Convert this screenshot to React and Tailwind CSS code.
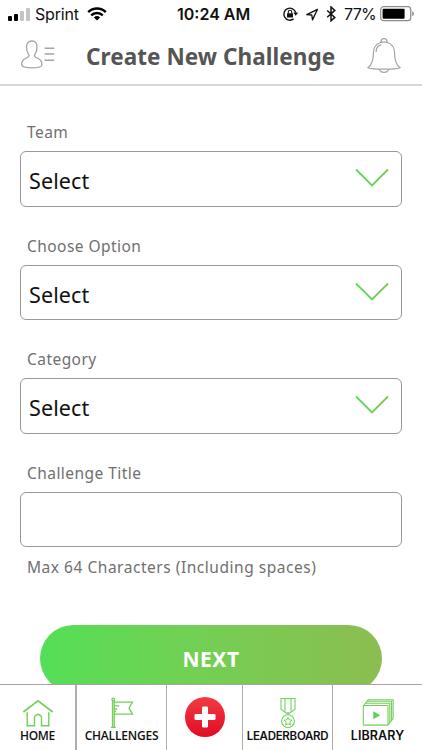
import React from "react";

function Signal() {
  return (
    <svg width="23" height="13" viewBox="0 0 23 13">
      <rect x="0" y="8" width="4" height="5" rx="1" fill="#000" />
      <rect x="6" y="6" width="4" height="7" rx="1" fill="#000" />
      <rect x="12" y="3" width="4" height="10" rx="1" fill="#c4c4c4" />
      <rect x="18" y="0" width="4" height="13" rx="1" fill="#c4c4c4" />
    </svg>
  );
}

function Wifi() {
  return (
    <svg width="20" height="14" viewBox="0 0 20 14" fill="none" stroke="#000" strokeWidth="2.4">
      <path d="M1.2 5.1a12.6 12.6 0 0 1 17.6 0M4.2 8.4a8.3 8.3 0 0 1 11.6 0" />
      <path d="M10 13.6 6.9 10.5a4.5 4.5 0 0 1 6.2 0z" fill="#000" stroke="none" />
    </svg>
  );
}

function StatusIcons() {
  return (
    <svg width="56" height="16" viewBox="0 0 56 16" fill="none" stroke="#111">
      <path d="M11.6 12.900A6 6 0 1 1 13.700 6.600" strokeWidth="1.4" />
      <path d="M11.3 6.600h4.800l-2.400 3.200z" fill="#111" stroke="none" />
      <rect x="5" y="7.2" width="6" height="4.4" rx=".6" fill="#111" stroke="none" />
      <path d="M6.3 7.4V6a1.7 1.7 0 0 1 3.4 0v1.4" strokeWidth="1.1" />
      <path d="M35.500 3.300 24.800 8.700l5 .3.700 4.900z" strokeWidth="1.3" strokeLinejoin="round" />
      <path d="m45.2 4.500 7.600 6.900-3.800 3.400V1l3.800 3.400-7.600 6.900" strokeWidth="1.5" />
    </svg>
  );
}

function Battery() {
  return (
    <svg width="35" height="16" viewBox="0 0 35 16">
      <rect x=".7" y=".7" width="30" height="14" rx="3" fill="none" stroke="#8b8b8b" strokeWidth="1.2" />
      <rect x="2.6" y="2.7" width="22" height="10" rx="1" fill="#000" />
      <path d="M32.3 5.3c2 .9 2 4 0 4.9z" fill="#777" />
    </svg>
  );
}

function Profile() {
  return (
    <svg width="34" height="29" viewBox="0 0 34 29" fill="none" stroke="#a3a3a3" strokeWidth="1.3">
      <path d="M11 1C7.600 1 5.400 3.200 5.500 7c0 3 .5 5.200 2.100 7.300.7 1.100.4 2.300-.8 3-2.400 1.300-4.700 2-5.600 4.200C.6 23 .6 24.600.9 25.700 3 28.500 19.100 28.500 20.700 25.700c.3-1.100.2-2.700-.4-4.200-.9-2.200-3.200-2.900-5.600-4.200-1.200-.7-1.500-1.900-.8-3C15.500 12.200 16 10 16 7c.1-3.800-1.600-6-5-6z" />
      <path d="M23.600 8.200h9.600M23.600 14h9.600M23.600 20.200h9.600" strokeWidth="1.500" />
    </svg>
  );
}

function Bell() {
  return (
    <svg className="shrink-0" width="34" height="36" viewBox="0 0 34 36" fill="none" stroke="#a3a3a3" strokeWidth="1.2">
      <path d="M14 4.300V3.600a3 3 0 0 1 6 0v.7C25.500 6 27.600 10 27.600 15.500c0 7 1.300 11 5.400 14.200-4.300 2-27.700 2-32 0 4.100-3.200 5.400-7.200 5.400-14.200C6.400 10 8.500 6 14 4.300z" />
      <path d="M9.100 14c0-4 1.800-6.500 5-7.200M14 4.300q3-.8 6 0M12.300 31.200c1 4.200 8.400 4.200 9.400 0" />
    </svg>
  );
}

function Chevron() {
  return (
    <svg width="34" height="20" viewBox="0 0 34 20" fill="none">
      <defs>
        <linearGradient id="chevron" x1="0" y1="0" x2="1" y2="0">
          <stop stopColor="#50df58" />
          <stop offset="1" stopColor="#85c351" />
        </linearGradient>
      </defs>
      <path d="m1 1.500 16 16 16-16" stroke="url(#chevron)" strokeWidth="1.800" />
    </svg>
  );
}

function Home() {
  return (
    <svg width="32" height="28" viewBox="0 0 32 28" fill="none" stroke="#73cf58" strokeWidth="1.400">
      <path d="M1.300 13 16 1.800 30.700 13" strokeWidth="1.600" />
      <path d="M5.200 13.200v13.600h7.300V19a3.500 3.500 0 0 1 7 0v7.800h7.300V13.200" />
    </svg>
  );
}

function Flag() {
  return (
    <svg width="24" height="32" viewBox="0 0 24 32" fill="none" stroke="#73cf58" strokeWidth="1.300">
      <circle cx="3.300" cy="2.500" r="1.300" />
      <path d="M2.500 4v26M4.200 4v26M.8 30.300h5M4.200 5.200h18.300l-3.500 6 3.500 6H4.200M4.200 8.800h5M4.200 12h3M4.200 14.500h2" />
    </svg>
  );
}

function Medal() {
  return (
    <svg width="18" height="32" viewBox="0 0 18 32" fill="none" stroke="#6ed35c" strokeWidth="1.100">
      <path d="M2 1.500h14v11L9 17l-7-4.500zM6 1.500v12.700M12 1.500v12.700M9 15v3" />
      <circle cx="9" cy="24.200" r="6.400" />
      <path d="m9 20.300 1.200 2.500 2.800.4-2 2 .5 2.800-2.500-1.300L6.500 28l.5-2.800-2-2 2.800-.4z" strokeWidth="1" />
    </svg>
  );
}

function Library() {
  return (
    <svg width="32" height="28" viewBox="0 0 32 28" fill="none" stroke="#73cf58" strokeWidth="1.100">
      <rect x="1.300" y="6.500" width="24.700" height="19.600" rx=".5" />
      <path d="M1.600 6.500 3.500 4.300h24.300v19.400L26 26M3.500 4.300l1.500-2h24.500v19.300l-1.700 2.100M5 2.300l1.200-1.500h24.900v18.700l-1.600 2.100" />
      <path d="m11.300 12.300 6.900 4-6.900 4z" fill="#5fd056" stroke="none" />
    </svg>
  );
}

function SelectField({ label }) {
  return (
    <div className="mb-[17.500px]">
      <Label>{label}</Label>
      <div className="flex h-[55.500px] items-center justify-between rounded-[6px] border-[1.500px] border-[#999] pl-[8px] pr-[12px]">
        <span className="pt-[4px] text-[21.500px] leading-none tracking-[0.100px] text-[#111]">Select</span>
        <div className="pb-[1px]"><Chevron /></div>
      </div>
    </div>
  );
}

function Label({ children }) {
  return (
    <div className="flex h-[40.500px] items-center pl-[7px] pt-[4px] text-[15.500px] tracking-[0.450px] text-[#707070]">
      {children}
    </div>
  );
}

function NavItem({ icon, label, className }) {
  return (
    <div className={"flex flex-col items-center whitespace-nowrap border-[#acacac] " + className}>
      <div className="flex h-[32px] items-center justify-center">{icon}</div>
      <span className="font-semibold leading-[14px] text-[#111]">{label}</span>
    </div>
  );
}

export default function App() {
  return (
    <div className="flex h-[750px] w-[422px] flex-col overflow-hidden bg-white font-['Noto_Sans',sans-serif]">
      <div className="flex h-[28px] shrink-0 items-center pl-[8px] pr-[6px] font-['Inter',sans-serif] text-[16px] text-[#111]">
        <div className="flex w-[169px] items-center">
          <Signal />
          <span className="ml-[4px] mr-[8px] tracking-[-0.200px]">Sprint</span>
          <Wifi />
        </div>
        <span className="w-[105px] font-semibold">10:24 AM</span>
        <StatusIcons />
        <span className="ml-[6px] w-[36px] tracking-[-0.700px]">77%</span>
        <Battery />
      </div>
      <header className="flex h-[58px] shrink-0 items-center border-b-2 border-[#d7d7d7] pl-[21px] pr-[21px]">
        <div className="w-[65px] pb-[3px]"><Profile /></div>
        <h1 className="w-[281px] shrink-0 whitespace-nowrap pt-[3px] text-[22.500px] font-bold leading-none tracking-[0.060px] text-[#555]">Create New Challenge</h1>
        <Bell />
      </header>
      <main className="min-h-0 flex-1 overflow-hidden px-[20px] pt-[24.500px]">
        <SelectField label="Team" />
        <SelectField label="Choose Option" />
        <SelectField label="Category" />
        <Label>Challenge Title</Label>
        <input aria-label="Challenge Title" className="block h-[55.500px] w-full rounded-[6px] border-[1.500px] border-[#999] px-3 outline-none" />
        <p className="mt-[8px] whitespace-nowrap pl-[7px] text-[15.500px] leading-[24px] tracking-[0.530px] text-[#707070]">Max 64 Characters (Including spaces)</p>
        <button className="mx-[20px] mt-[45.500px] flex h-[67px] w-[342px] items-center justify-center rounded-full bg-linear-to-r from-[#52df57] to-[#8bbd50] pt-[4px] text-[21px] font-bold tracking-[0.500px] text-white">NEXT</button>
      </main>
      <nav className="flex h-[66px] shrink-0 border-t border-[#a5a5a5] bg-white">
        <NavItem icon={<Home />} label="HOME" className="w-[77px] border-r-2 pt-[12px] font-['Open_Sans',sans-serif] text-[12px] tracking-[-0.300px]" />
        <NavItem icon={<Flag />} label="CHALLENGES" className="w-[90px] border-r pt-[12px] font-['Open_Sans',sans-serif] text-[12px] tracking-[-0.200px]" />
        <div className="flex w-[76px] justify-center border-r border-[#acacac] pt-[12px]">
          <svg width="40" height="40" viewBox="0 0 40 40">
            <defs>
              <linearGradient id="plus" x1="0" y1="0" x2="0" y2="1">
                <stop stopColor="#f13c42" />
                <stop offset="1" stopColor="#e20b24" />
              </linearGradient>
            </defs>
            <circle cx="20" cy="20" r="20" fill="url(#plus)" />
            <rect x="17" y="9.500" width="6" height="21" rx="1.200" fill="#fff" />
            <rect x="9.500" y="17" width="21" height="6" rx="1.200" fill="#fff" />
          </svg>
        </div>
        <NavItem icon={<Medal />} label="LEADERBOARD" className="w-[90px] border-r pt-[12px] font-['Inter',sans-serif] text-[11.500px] tracking-[-0.280px]" />
        <NavItem icon={<Library />} label="LIBRARY" className="w-[89px] pt-[12px] font-['Inter',sans-serif] text-[12.500px] tracking-[0.100px]" />
      </nav>
    </div>
  );
}
